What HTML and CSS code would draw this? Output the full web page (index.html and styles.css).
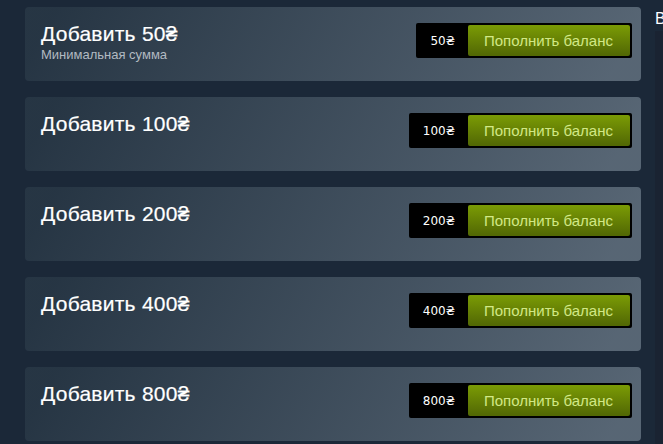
FILE: index.html
```html
<!DOCTYPE html>
<html lang="ru">
<head>
<meta charset="utf-8">
<title>Пополнить баланс</title>
<link rel="stylesheet" href="styles.css">
</head>
<body>
<div class="page">
  <div class="main">
    <div class="card">
      <div class="info">
        <h1 class="title">Добавить 50₴</h1>
        <p class="note">Минимальная сумма</p>
      </div>
      <div class="action">
        <span class="price">50₴</span>
        <a class="btn" href="#">Пополнить баланс</a>
      </div>
    </div>
    <div class="card">
      <div class="info"><h1 class="title">Добавить 100₴</h1></div>
      <div class="action">
        <span class="price">100₴</span>
        <a class="btn" href="#">Пополнить баланс</a>
      </div>
    </div>
    <div class="card">
      <div class="info"><h1 class="title">Добавить 200₴</h1></div>
      <div class="action">
        <span class="price">200₴</span>
        <a class="btn" href="#">Пополнить баланс</a>
      </div>
    </div>
    <div class="card">
      <div class="info"><h1 class="title">Добавить 400₴</h1></div>
      <div class="action">
        <span class="price">400₴</span>
        <a class="btn" href="#">Пополнить баланс</a>
      </div>
    </div>
    <div class="card">
      <div class="info"><h1 class="title">Добавить 800₴</h1></div>
      <div class="action">
        <span class="price">800₴</span>
        <a class="btn" href="#">Пополнить баланс</a>
      </div>
    </div>
  </div>
  <div class="side">
    <div class="side-head">Ваш аккаунт Steam</div>
    <div class="side-panel"></div>
  </div>
</div>
</body>
</html>
```
FILE: styles.css
```css
html, body {
  margin: 0;
  padding: 0;
  background: #1b2838;
  overflow: hidden;
}
body {
  font-family: "Liberation Sans", Arial, sans-serif;
  width: 663px;
  height: 444px;
}
.page {
  display: flex;
  align-items: flex-start;
  width: 663px;
  height: 444px;
  overflow: hidden;
}
.main {
  flex: 0 0 616px;
  margin-left: 25px;
  padding-top: 7px;
  display: flex;
  flex-direction: column;
  gap: 16px;
}
.card {
  height: 74px;
  box-sizing: border-box;
  border-radius: 4px;
  padding: 15px 9px 0 16px;
  display: flex;
  justify-content: space-between;
  align-items: flex-start;
  background: linear-gradient(-60deg, rgba(226,244,255,0.3) 5%, rgba(84,107,115,0.2) 95%);
}
.title {
  margin: 0;
  font-size: 21px;
  line-height: 24px;
  font-weight: normal;
  letter-spacing: 0.25px;
  color: #ffffff;
  -webkit-text-stroke: 0.2px #ffffff;
}
.note {
  margin: 1px 0 0;
  font-size: 13px;
  line-height: 15px;
  color: #b2bac2;
}
.action {
  margin-top: 1px;
  display: flex;
  align-items: center;
  background: #000;
  border-radius: 2px;
  padding: 2px 2px 2px 14px;
  gap: 13px;
}
.price {
  font-family: "DejaVu Sans", Verdana, sans-serif;
  font-size: 12px;
  color: #ffffff;
}
.btn {
  display: block;
  height: 31px;
  line-height: 31px;
  padding: 0 17px 0 16px;
  border-radius: 2px;
  font-size: 15px;
  color: #d2e885;
  text-decoration: none;
  background: linear-gradient(to bottom, #799905 5%, #536904 95%);
}
.side {
  flex: 0 0 auto;
  margin-left: 14px;
  padding-top: 10px;
}
.side-head {
  font-size: 16px;
  line-height: 18px;
  color: #ffffff;
  white-space: nowrap;
}
.side-panel {
  margin-top: 3px;
  width: 300px;
  height: 420px;
  background: #1a2332;
}
```
